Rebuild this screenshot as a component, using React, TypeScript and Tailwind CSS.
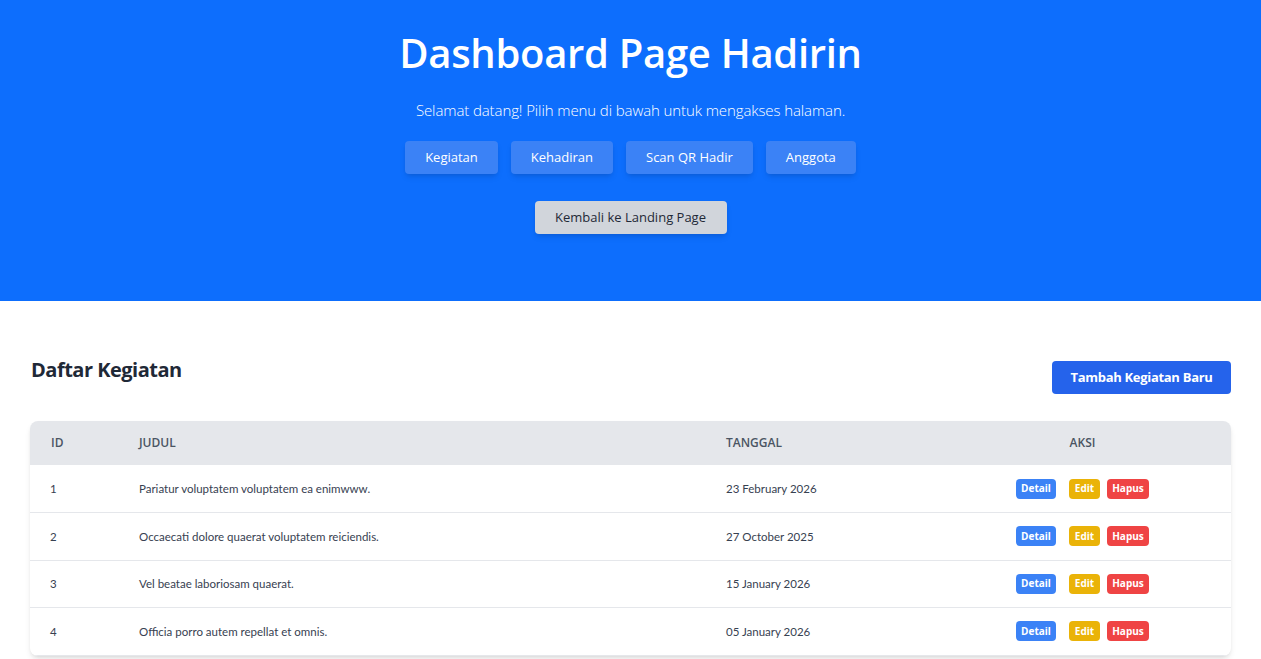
import React from "react";

const rows = [
  { id: 1, judul: "Pariatur voluptatem voluptatem ea enimwww.", tanggal: "23 February 2026" },
  { id: 2, judul: "Occaecati dolore quaerat voluptatem reiciendis.", tanggal: "27 October 2025" },
  { id: 3, judul: "Vel beatae laboriosam quaerat.", tanggal: "15 January 2026" },
  { id: 4, judul: "Officia porro autem repellat et omnis.", tanggal: "05 January 2026" },
];

export default function App() {
  return (
    <div className="min-h-screen bg-white" style={{ fontFamily: '"Open Sans", "Noto Sans", sans-serif' }}>
      <header className="bg-[#0d6efd] h-[301px] flex flex-col items-center pt-[33px]">
        <h1 className="text-[40px] leading-[40px] font-semibold tracking-[-0.3px] text-white">Dashboard Page Hadirin</h1>
        <p className="mt-[25px] text-[15px] leading-[24px] font-light tracking-[-0.1px] text-white">
          Selamat datang! Pilih menu di bawah untuk mengakses halaman.
        </p>
        <div className="mt-[19px] flex gap-[13px]">
          {["Kegiatan", "Kehadiran", "Scan QR Hadir", "Anggota"].map((t) => (
            <button key={t} className="h-[33px] px-5 rounded bg-[#3b82f6] text-white text-[13px] shadow-md">
              {t}
            </button>
          ))}
        </div>
        <button className="mt-[27px] h-[33px] w-[192px] rounded bg-[#d1d5db] text-[#1f2937] text-[13px] shadow-md">
          Kembali ke Landing Page
        </button>
      </header>

      <main className="px-[30px] pt-[60px]">
        <div className="flex justify-between items-start">
          <h2 className="ml-[1px] text-[20px] leading-[16px] font-bold tracking-[-0.5px] text-[#1f2937] mt-[1px]">Daftar Kegiatan</h2>
          <button className="h-[33px] w-[179px] rounded bg-[#2563eb] text-white text-[13px] font-bold tracking-[-0.3px]">
            Tambah Kegiatan Baru
          </button>
        </div>

        <div className="mt-[27px] rounded-lg shadow-md overflow-hidden">
          <table className="w-full border-collapse text-left">
            <thead>
              <tr className="bg-[#e5e7eb] h-[44px] text-[12px] font-semibold uppercase text-[#4b5563]">
                <th className="w-[89px] pl-[21px] font-semibold">ID</th>
                <th className="w-[587px] pl-[20px] font-semibold">Judul</th>
                <th className="w-[228px] pl-[20px] font-semibold">Tanggal</th>
                <th className="text-center font-semibold">Aksi</th>
              </tr>
            </thead>
            <tbody>
              {rows.map((r) => (
                <tr
                  key={r.id}
                  className="h-[47.5px] border-b border-[#e5e7eb] text-[11.5px] text-[#374151]"
                  style={{ fontFamily: 'Lato, "Open Sans", sans-serif' }}
                >
                  <td className="pl-[20px]">{r.id}</td>
                  <td className="pl-[20px]">{r.judul}</td>
                  <td className="pl-[20px]">{r.tanggal}</td>
                  <td className="text-center" style={{ fontFamily: '"Open Sans", sans-serif' }}>
                    <span className="inline-flex items-center">
                      <span className="h-[20px] w-[40px] rounded bg-[#3b82f6] text-white text-[10px] font-bold flex items-center justify-center">Detail</span>
                      <span className="ml-[13px] h-[20px] w-[31px] rounded bg-[#eab308] text-white text-[10px] font-bold flex items-center justify-center">Edit</span>
                      <span className="ml-[7px] h-[20px] w-[42px] rounded bg-[#ef4444] text-white text-[10px] font-bold flex items-center justify-center">Hapus</span>
                    </span>
                  </td>
                </tr>
              ))}
            </tbody>
          </table>
        </div>
      </main>
    </div>
  );
}
